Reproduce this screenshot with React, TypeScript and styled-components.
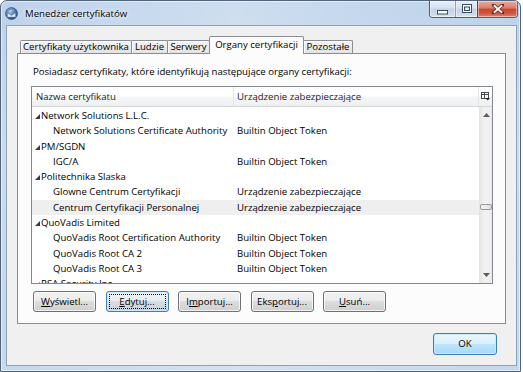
import React from 'react';
import styled, { createGlobalStyle } from 'styled-components';

const GlobalStyle = createGlobalStyle`
  html, body { margin: 0; padding: 0; background: #ffffff; }
  body {
    font-family: "Open Sans", "Noto Sans", sans-serif;
    font-size: 9.6px;
    color: #000;
  }
  #root { width: 523px; height: 372px; overflow: hidden; }
`;

const Window = styled.div`
  box-sizing: border-box;
  width: 521px;
  height: 372px;
  border: 1px solid #52647c;
  border-radius: 7px 7px 0 0;
  background:
    linear-gradient(90deg, rgba(255,255,255,0) 0%, rgba(255,255,255,0.25) 45%, rgba(255,255,255,0.1) 70%, rgba(255,255,255,0) 100%),
    linear-gradient(180deg, #bdd2ea 0%, #c9dcf0 40%, #c4d8ee 100%);
  box-shadow: inset 0 0 0 1px rgba(255, 255, 255, 0.55);
  display: flex;
  flex-direction: column;
  overflow: hidden;
`;

const TitleBar = styled.div`
  height: 24px;
  flex: none;
  display: flex;
  align-items: center;
  padding: 0 2px 0 4px;
`;

const TitleIcon = styled.svg`
  width: 13px;
  height: 13px;
  flex: none;
  margin-top: 1px;
`;

const TitleText = styled.div`
  margin-left: 7px;
  flex: 1;
  font-size: 9.6px;
  color: #000;
  text-shadow: 0 0 6px rgba(255, 255, 255, 0.9), 0 0 3px rgba(255, 255, 255, 0.8);
  white-space: nowrap;
`;

const CaptionGroup = styled.div`
  align-self: flex-start;
  display: flex;
  height: 17px;
  border: 1px solid #4c5d74;
  border-top: none;
  border-radius: 0 0 4px 4px;
  overflow: hidden;
  box-sizing: border-box;
`;

const CaptionButton = styled.div<{ $w: number; $close?: boolean }>`
  box-sizing: border-box;
  width: ${p => p.$w}px;
  height: 100%;
  display: flex;
  align-items: center;
  justify-content: center;
  border-left: ${p => (p.$close ? '1px solid #6b3b38' : '1px solid #8e9fb6')};
  &:first-child { border-left: none; }
  background: ${p =>
    p.$close
      ? 'linear-gradient(180deg, #e9a99c 0%, #dc7d6a 45%, #c8452f 50%, #cf5a40 80%, #e48a6a 100%)'
      : 'linear-gradient(180deg, #e6eef8 0%, #d6e2f0 45%, #c2d2e6 50%, #cddbec 85%, #dbe6f3 100%)'};
  box-shadow: inset 0 0 0 1px rgba(255, 255, 255, 0.45);
`;

const FrameBody = styled.div`
  flex: 1;
  display: flex;
  padding: 0 3px 5px 5px;
  min-height: 0;
`;

const Client = styled.div`
  box-sizing: border-box;
  flex: 1;
  border: 1px solid #8ea2bb;
  background: #f0f0f0;
  padding: 10px 10px 10px 10px;
  display: flex;
  flex-direction: column;
`;

const TabStrip = styled.div`
  display: flex;
  align-items: flex-end;
  height: 17px;
  flex: none;
  padding-left: 4px;
  position: relative;
  z-index: 1;
`;

const Tab = styled.div<{ $w: number; $active?: boolean }>`
  box-sizing: border-box;
  width: ${p => p.$w}px;
  height: ${p => (p.$active ? 18 : 13)}px;
  margin-left: -1px;
  margin-bottom: ${p => (p.$active ? -1 : 0)}px;
  border: 1px solid #898c95;
  border-bottom: none;
  border-radius: 2px 2px 0 0;
  background: ${p =>
    p.$active ? '#fcfcfc' : 'linear-gradient(180deg, #f3f3f3 0%, #ebebeb 50%, #e3e3e3 100%)'};
  box-shadow: ${p => (p.$active ? 'none' : 'inset 1px 1px 0 #ffffff')};
  display: flex;
  justify-content: center;
  align-items: ${p => (p.$active ? 'flex-start' : 'center')};
  padding-top: ${p => (p.$active ? 2 : 0)}px;
  line-height: 12px;
  white-space: nowrap;
  color: #000;
`;

const Panel = styled.div`
  box-sizing: border-box;
  height: 271px;
  flex: none;
  border: 1px solid #898c95;
  background: #fcfcfc;
  padding: 11px 11px 0 13px;
  display: flex;
  flex-direction: column;
`;

const Intro = styled.div`
  height: 13px;
  line-height: 13px;
  padding-left: 2px;
  white-space: nowrap;
`;

const ListBox = styled.div`
  box-sizing: border-box;
  width: 462px;
  height: 198px;
  margin-top: 8px;
  border: 1px solid #828790;
  background: #ffffff;
  display: flex;
  flex-direction: column;
  overflow: hidden;
`;

const Header = styled.div`
  box-sizing: border-box;
  height: 20px;
  flex: none;
  display: flex;
  border-bottom: 1px solid #d5d5d5;
  background: linear-gradient(180deg, #ffffff 0%, #ffffff 45%, #f4f5f7 55%, #eff0f2 100%);
  line-height: 19px;
  color: #1e1e1e;
`;

const HeaderCell = styled.div<{ $w?: number }>`
  box-sizing: border-box;
  ${p => (p.$w ? `width: ${p.$w}px; flex: none;` : 'flex: 1;')}
  padding-left: ${p => (p.$w ? 4 : 3)}px;
  border-right: 1px solid #e3e5e8;
  white-space: nowrap;
  overflow: hidden;
`;

const PickerCell = styled.div`
  width: 13px;
  flex: none;
  display: flex;
  align-items: center;
  justify-content: center;
`;

const ListBody = styled.div`
  flex: 1;
  display: flex;
  min-height: 0;
`;

const Rows = styled.div`
  flex: 1;
  display: flex;
  flex-direction: column;
  padding-top: 1px;
  overflow: hidden;
`;

const Row = styled.div<{ $selected?: boolean }>`
  display: flex;
  align-items: center;
  height: 15.3px;
  flex: none;
  line-height: 15.3px;
  white-space: nowrap;
  background: ${p => (p.$selected ? '#efefef' : 'transparent')};
`;

const NameCell = styled.div<{ $indent: number }>`
  box-sizing: border-box;
  width: 201px;
  flex: none;
  display: flex;
  align-items: center;
  padding-left: ${p => p.$indent}px;
  overflow: hidden;
`;

const GroupCell = styled.div`
  display: flex;
  align-items: center;
  padding-left: 3px;
`;

const Twisty = styled.svg`
  width: 5px;
  height: 5px;
  flex: none;
  margin: 2px 1px 0 0;
`;

const DeviceCell = styled.div`
  padding-left: 4px;
`;

const ScrollBar = styled.div`
  box-sizing: border-box;
  width: 13px;
  flex: none;
  display: flex;
  flex-direction: column;
  border-left: 1px solid #e4e4e4;
  background: linear-gradient(90deg, #e6e6e6 0%, #f1f1f1 35%, #f1f1f1 70%, #e9e9e9 100%);
`;

const ScrollArrow = styled.div`
  height: 16px;
  flex: none;
  display: flex;
  align-items: center;
  justify-content: center;
`;

const Track = styled.div`
  flex: 1;
  display: flex;
  flex-direction: column;
  align-items: stretch;
`;

const Thumb = styled.div<{ $offset: number }>`
  box-sizing: border-box;
  margin-top: ${p => p.$offset}px;
  height: 6px;
  border: 1px solid #9a9a9a;
  border-radius: 2px;
  background: linear-gradient(90deg, #f4f4f4 0%, #e8e8e8 60%, #dcdcdc 100%);
`;

const ButtonRow = styled.div`
  display: flex;
  gap: 9.5px;
  margin-top: 7px;
  padding-left: 2px;
`;

const WinButton = styled.div<{ $w: number; $focused?: boolean; $default?: boolean }>`
  box-sizing: border-box;
  width: ${p => p.$w}px;
  height: ${p => (p.$default ? 22 : 21)}px;
  flex: none;
  border: 1px solid ${p => (p.$focused || p.$default ? '#3c7fb1' : '#707070')};
  border-radius: 3px;
  background: ${p =>
    p.$default
      ? 'linear-gradient(180deg, #eaf6fd 0%, #d9f0fc 50%, #bee6fd 50%, #a7d9f5 100%)'
      : p.$focused
      ? 'linear-gradient(180deg, #eef3f7 0%, #e5ebf0 50%, #d5dde5 50%, #c8d2dc 100%)'
      : 'linear-gradient(180deg, #f2f2f2 0%, #ebebeb 50%, #dddddd 50%, #cfcfcf 100%)'};
  box-shadow: inset 0 0 0 1px ${p => (p.$focused || p.$default ? 'rgba(200, 235, 255, 0.9)' : 'rgba(255, 255, 255, 0.75)')};
  outline: ${p => (p.$focused ? '1px dotted #000' : 'none')};
  outline-offset: -4px;
  display: flex;
  align-items: center;
  justify-content: center;
  white-space: nowrap;
  color: #000;
  line-height: 12px;
  u { text-decoration: underline; text-underline-offset: 1px; }
`;

const OkRow = styled.div`
  display: flex;
  justify-content: flex-end;
  margin-top: 9px;
  padding-right: 9px;
`;

type ListRow =
  | { kind: 'group'; name: string }
  | { kind: 'cert'; name: string; device: string; selected?: boolean };

const BOT = 'Builtin Object Token';
const UZ = 'Urządzenie zabezpieczające';

const rows: ListRow[] = [
  { kind: 'group', name: 'Network Solutions L.L.C.' },
  { kind: 'cert', name: 'Network Solutions Certificate Authority', device: BOT },
  { kind: 'group', name: 'PM/SGDN' },
  { kind: 'cert', name: 'IGC/A', device: BOT },
  { kind: 'group', name: 'Politechnika Slaska' },
  { kind: 'cert', name: 'Glowne Centrum Certyfikacji', device: UZ },
  { kind: 'cert', name: 'Centrum Certyfikacji Personalnej', device: UZ, selected: true },
  { kind: 'group', name: 'QuoVadis Limited' },
  { kind: 'cert', name: 'QuoVadis Root Certification Authority', device: BOT },
  { kind: 'cert', name: 'QuoVadis Root CA 2', device: BOT },
  { kind: 'cert', name: 'QuoVadis Root CA 3', device: BOT },
  { kind: 'group', name: 'RSA Security Inc' },
];

const tabs = [
  { label: 'Certyfikaty użytkownika', w: 112 },
  { label: 'Ludzie', w: 37 },
  { label: 'Serwery', w: 43 },
  { label: 'Organy certyfikacji', w: 95, active: true },
  { label: 'Pozostałe', w: 50 },
];

const AppIcon = () => (
  <TitleIcon viewBox="0 0 13 13">
    <defs>
      <radialGradient id="ic" cx="40%" cy="35%" r="70%">
        <stop offset="0%" stopColor="#9cc3ea" />
        <stop offset="60%" stopColor="#3f74b4" />
        <stop offset="100%" stopColor="#1d467e" />
      </radialGradient>
    </defs>
    <circle cx="6.5" cy="6.5" r="6" fill="url(#ic)" stroke="#2a4a72" strokeWidth="0.6" />
    <path d="M2.5 6.2 L6.5 8.6 L10.5 6.2 L10.5 10 L2.5 10 Z" fill="#e8eef5" stroke="#6c7d92" strokeWidth="0.4" />
    <path d="M3 5.2 C4 2.6 7.5 2 9.8 3.6 C8 3.4 6 4.2 5.2 5.8 Z" fill="#c9d1da" stroke="#707a86" strokeWidth="0.4" />
  </TitleIcon>
);

const MinGlyph = () => (
  <svg width="11" height="5" viewBox="0 0 11 5" style={{ marginTop: 7 }}>
    <rect x="0.5" y="0.5" width="10" height="3.5" fill="#ffffff" stroke="#3a4a5f" strokeWidth="1" />
  </svg>
);

const MaxGlyph = () => (
  <svg width="10" height="9" viewBox="0 0 10 9" style={{ marginTop: -1 }}>
    <rect x="0.5" y="0.5" width="9" height="8" fill="#ffffff" stroke="#3a4a5f" strokeWidth="1" />
    <rect x="2.5" y="3" width="5" height="3.5" fill="#e4ebf4" stroke="#3a4a5f" strokeWidth="1" />
  </svg>
);

const CloseGlyph = () => (
  <svg width="12" height="10" viewBox="0 0 12 10" style={{ marginTop: -1 }}>
    <path d="M1.5 1 L10.5 9 M10.5 1 L1.5 9" stroke="#5a2620" strokeWidth="3.4" strokeLinecap="square" />
    <path d="M1.8 1.3 L10.2 8.7 M10.2 1.3 L1.8 8.7" stroke="#ffffff" strokeWidth="1.8" strokeLinecap="butt" />
  </svg>
);

const ColumnPickerIcon = () => (
  <svg width="9" height="9" viewBox="0 0 9 9">
    <rect x="0.5" y="0.5" width="7" height="6" fill="#ffffff" stroke="#4b4b4b" strokeWidth="1" />
    <path d="M0.5 2.5 H7.5 M3.5 0.5 V6.5" stroke="#4b4b4b" strokeWidth="1" />
    <path d="M4.5 6 H9 L6.75 8.5 Z" fill="#222222" />
  </svg>
);

const UpArrow = () => (
  <svg width="7" height="4" viewBox="0 0 7 4">
    <path d="M0 4 L3.5 0 L7 4 Z" fill="#5b5b5b" />
  </svg>
);

const DownArrow = () => (
  <svg width="7" height="4" viewBox="0 0 7 4">
    <path d="M0 0 L3.5 4 L7 0 Z" fill="#5b5b5b" />
  </svg>
);

const TwistyIcon = () => (
  <Twisty viewBox="0 0 5 5">
    <path d="M5 0 L5 5 L0 5 Z" fill="#3a3a3a" />
  </Twisty>
);

export default function App() {
  return (
    <>
      <GlobalStyle />
      <Window>
        <TitleBar>
          <AppIcon />
          <TitleText>Menedżer certyfikatów</TitleText>
          <CaptionGroup>
            <CaptionButton $w={25}>
              <MinGlyph />
            </CaptionButton>
            <CaptionButton $w={22}>
              <MaxGlyph />
            </CaptionButton>
            <CaptionButton $w={40} $close>
              <CloseGlyph />
            </CaptionButton>
          </CaptionGroup>
        </TitleBar>
        <FrameBody>
          <Client>
            <TabStrip>
              {tabs.map(t => (
                <Tab key={t.label} $w={t.w} $active={t.active}>
                  {t.label}
                </Tab>
              ))}
            </TabStrip>
            <Panel>
              <Intro>Posiadasz certyfikaty, które identyfikują następujące organy certyfikacji:</Intro>
              <ListBox>
                <Header>
                  <HeaderCell $w={202}>Nazwa certyfikatu</HeaderCell>
                  <HeaderCell>Urządzenie zabezpieczające</HeaderCell>
                  <PickerCell>
                    <ColumnPickerIcon />
                  </PickerCell>
                </Header>
                <ListBody>
                  <Rows>
                    {rows.map((r, i) =>
                      r.kind === 'group' ? (
                        <Row key={i}>
                          <GroupCell>
                            <TwistyIcon />
                            {r.name}
                          </GroupCell>
                        </Row>
                      ) : (
                        <Row key={i} $selected={r.selected}>
                          <NameCell $indent={21}>{r.name}</NameCell>
                          <DeviceCell>{r.device}</DeviceCell>
                        </Row>
                      )
                    )}
                  </Rows>
                  <ScrollBar>
                    <ScrollArrow>
                      <UpArrow />
                    </ScrollArrow>
                    <Track>
                      <Thumb $offset={81} />
                    </Track>
                    <ScrollArrow>
                      <DownArrow />
                    </ScrollArrow>
                  </ScrollBar>
                </ListBody>
              </ListBox>
              <ButtonRow>
                <WinButton $w={63}>
                  <span><u>W</u>yświetl...</span>
                </WinButton>
                <WinButton $w={63} $focused>
                  <span><u>E</u>dytuj...</span>
                </WinButton>
                <WinButton $w={63}>
                  <span>I<u>m</u>portuj...</span>
                </WinButton>
                <WinButton $w={63}>
                  <span>Eks<u>p</u>ortuj...</span>
                </WinButton>
                <WinButton $w={63}>
                  <span><u>U</u>suń...</span>
                </WinButton>
              </ButtonRow>
            </Panel>
            <OkRow>
              <WinButton $w={64} $default>
                OK
              </WinButton>
            </OkRow>
          </Client>
        </FrameBody>
      </Window>
    </>
  );
}
